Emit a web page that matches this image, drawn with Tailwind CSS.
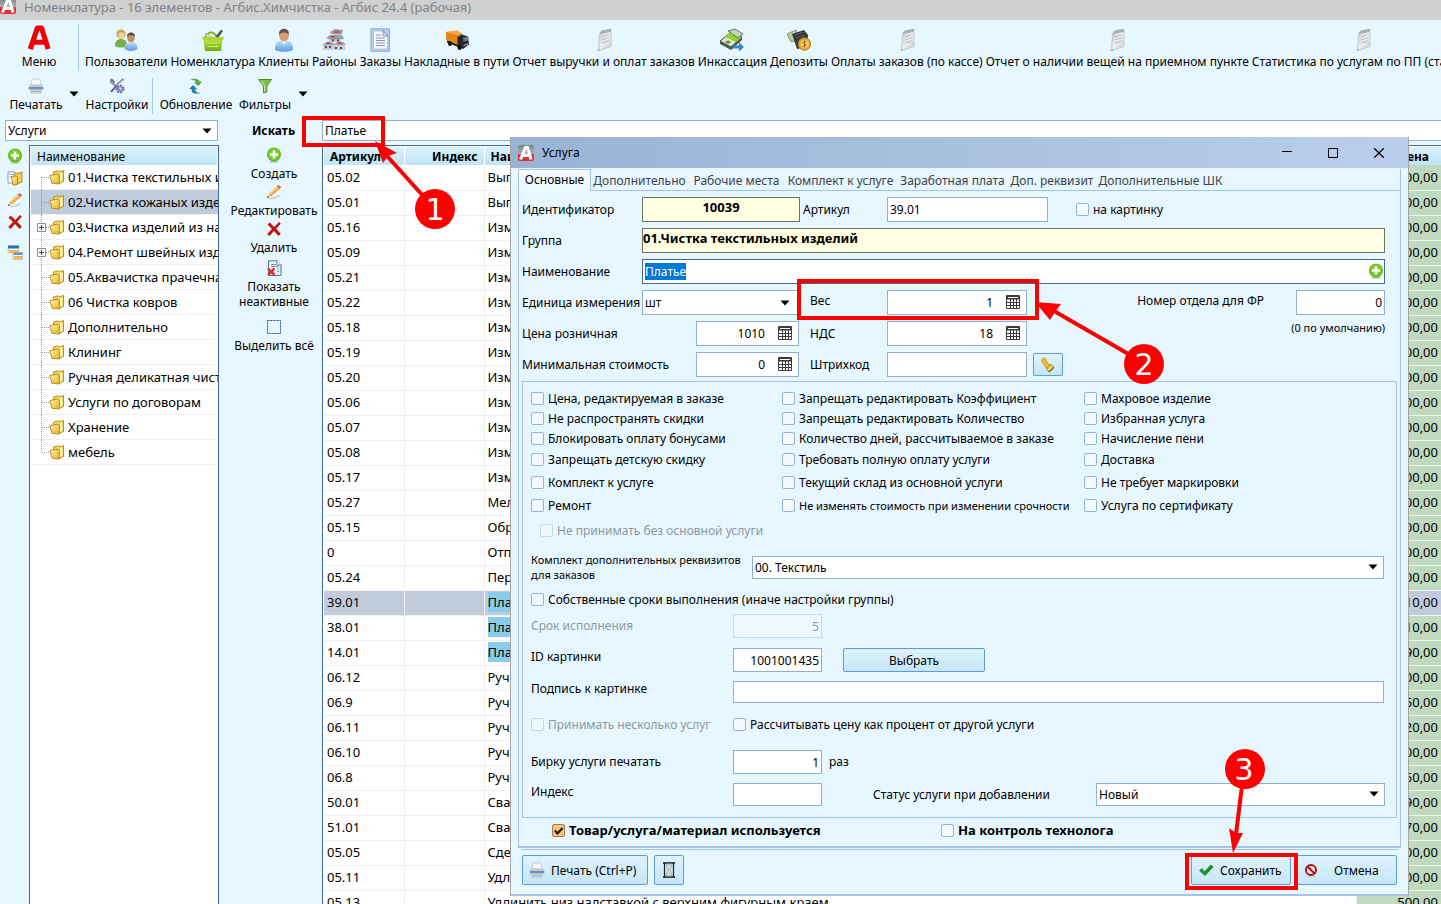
<!DOCTYPE html>
<html lang="ru">
<head>
  <meta charset="UTF-8">
  <meta name="viewport" content="width=device-width, initial-scale=1.0">
  <title>Номенклатура - Агбис.Химчистка</title>
  <script src="https://cdn.jsdelivr.net/npm/@tailwindcss/browser@4"></script>
</head>
<body class="h-screen flex flex-col overflow-hidden bg-[#e7f7ff] font-['Noto_Sans','Open_Sans',sans-serif] text-[12px] leading-[15px] text-black whitespace-nowrap">

<!-- icons -->
<svg class="absolute w-0 h-0">
  <defs>
    <linearGradient id="gold" x1="0" y1="0" x2="1" y2="1"><stop offset="0" stop-color="#fff6a8"/><stop offset="1" stop-color="#e8b422"/></linearGradient>
    <linearGradient id="blue" x1="0" y1="0" x2="0" y2="1"><stop offset="0" stop-color="#bfe0fb"/><stop offset="1" stop-color="#5b9bdc"/></linearGradient>
    <linearGradient id="lime" x1="0" y1="0" x2="0" y2="1"><stop offset="0" stop-color="#b6e03c"/><stop offset="1" stop-color="#6cae10"/></linearGradient>
    <linearGradient id="gray" x1="0" y1="0" x2="1" y2="1"><stop offset="0" stop-color="#b4bcc0"/><stop offset=".5" stop-color="#eceff0"/><stop offset="1" stop-color="#c8ced2"/></linearGradient>
    <linearGradient id="logo" x1="0" y1="0" x2="0" y2="1"><stop offset="0" stop-color="#7d8488"/><stop offset=".55" stop-color="#a9adb0"/><stop offset=".6" stop-color="#e0303a"/><stop offset="1" stop-color="#e0303a"/></linearGradient>
  </defs>
  <symbol id="i-logo" viewBox="0 0 16 16"><rect width="16" height="16" rx="2" fill="url(#logo)"/><path d="M2.500 14.500 7.500 2.600h2l3.600 11.900M5 10.500h7" fill="none" stroke="#fff" stroke-width="3"/></symbol>
  <symbol id="i-menu" viewBox="0 0 24 24"><path d="M4.500 21.500 10.600 3.500h3.600L19.800 21.500M8 15.600h9" fill="none" stroke="#f00000" stroke-width="4.400" stroke-linejoin="round"/></symbol>
  <symbol id="i-users" viewBox="0 0 24 24"><path d="M1 18c0-6 3-7 6-7s6 1 6 7c-3 2-9 2-12 0z" fill="#7cae4c"/><circle cx="7" cy="6" r="4.600" fill="#c9a653"/><ellipse cx="7.400" cy="7.600" rx="3" ry="3.400" fill="#f1d2a8"/><path d="M10.500 21c0-6 3-7 6.500-7s6.500 1 6.500 7c-3 2.500-10 2.500-13 0z" fill="url(#blue)"/><ellipse cx="17" cy="9.500" rx="3.800" ry="4.800" fill="#c98d5c"/><path d="M13 9c-.5-6 8.500-6 8 0-1.500-2-6-2.600-8 0z" fill="#55504c"/></symbol>
  <symbol id="i-basket" viewBox="0 0 24 24"><path d="M4 9c4-6 8-6 12 0" fill="none" stroke="#7fb718" stroke-width="2"/><path d="m4 5 7 4-3 3z" fill="#e9e4df" stroke="#a59a90" stroke-width=".6"/><path d="M12 12 20 1.500l2 1.500-7 10z" fill="#54585c"/><path d="M1 9h22l-1 3H2z" fill="#a8d832"/><path d="M2.500 12h19L20 23H4z" fill="url(#lime)"/><path d="M6 15h12M6.500 18.500h11" stroke="#cdee6a" stroke-width="1.200"/></symbol>
  <symbol id="i-client" viewBox="0 0 24 24"><path d="M3 22c-.5-8 4-9.500 9-9.500s9.500 1.500 9 9.500c-4 2.400-14 2.400-18 0z" fill="url(#blue)"/><path d="m9 12 3 5 3-5z" fill="#f2f8ff"/><ellipse cx="12" cy="7.500" rx="4.800" ry="6" fill="#d6a074"/><path d="M7 7C6-1.500 18-1.500 17 7c-2-3.500-8-3.500-10 0z" fill="#6a5648"/></symbol>
  <symbol id="i-houses" viewBox="0 0 24 24"><path d="M1 15h9v7H1zM10 15h13v7H10zM7 8h12v6H7zM11 3h8v5h-8z" fill="#c9ccd4"/><path d="m8 4 5-3 8 1-1 4H9zM4 10l4-3h12l2 4-12 1zM1 17l4-3h5l2 3zM12 17l3-3h6l3 3z" fill="#9a9fab"/><path d="M12 4h6M9 9h4M4 15h4M16 15h4" stroke="#cf3d3d" stroke-width="1.400"/><path d="M3 19h2M7 19h2M13 20h2M18 20h2M10 12.500h2M15 12.500h2" stroke="#444b5a" stroke-width="2"/></symbol>
  <symbol id="i-order" viewBox="0 0 24 24"><path d="M3 .8h18.500v22.500H3z" fill="#b8cdea" stroke="#8aa9d2"/><path d="M5.500 3H16l3.500 3.500V21h-14z" fill="#f5f9ff" stroke="#9ab5da" stroke-width=".7"/><path d="M15 2.500 20 8h-5z" fill="#c9dcf5" stroke="#6c90c6" stroke-width=".8"/><path d="M8 7h5M8 10h9M8 12.500h9M8 15h9M8 17.500h9" stroke="#7e97be" stroke-width="1.200"/></symbol>
  <symbol id="i-truck" viewBox="0 0 24 24"><path d="M1 4 12 2.500l5 3V16l-4 2L1 12z" fill="#e8841c"/><path d="M1 4 12 2.500l5 3-5 1.500z" fill="#f5ab49"/><path d="M12.500 9 17 6.500l6 2 1 8-6 4.500-5.500-2z" fill="#26282c"/><path d="m18 9.500 5-.5.500 3.500-5 1z" fill="#6d7a85"/><path d="M2 12.500 13 17v2L2 14.500z" fill="#1e1e1e"/><ellipse cx="5" cy="15.500" rx="2" ry="2.500" fill="#111"/><ellipse cx="14.500" cy="19.500" rx="2" ry="2.500" fill="#111"/><path d="M18.500 17.500 23 16" stroke="#c8c8c8"/></symbol>
  <symbol id="i-sheet" viewBox="0 0 24 24"><path d="M7.500 6 19 1v17.500L6.500 22.500z" fill="url(#gray)" stroke="#b9c1c5" stroke-width=".8"/><path d="M7.500 6C8 2.500 10 2 19 1v3z" fill="#a8b0b5"/><path d="m10 9 6.500-2.200M10 12l6.500-2.200M10 15l6.500-2.200" stroke="#b4bcc0"/><path d="M4.500 22.500 8 21v1.500z" fill="#9aa2a6"/></symbol>
  <symbol id="i-cash" viewBox="0 0 24 24"><path d="m0 13 11-9 11 5-11 10z" fill="#dfe6d2" stroke="#3d4a35"/><path d="m0 13 11 6v3L0 16zM11 19l11-10v3L11 22z" fill="#505c48"/><path d="m5 9 4-4 11 5-4 4z" fill="#8fd42a"/><path d="m8 3 7-2 8 5-5 4z" fill="#c7d3b8" stroke="#4a5940" stroke-width=".8"/><ellipse cx="8" cy="14" rx="2.500" ry="1.500" fill="#6d7e60"/><path d="M13 17.500h6V14l5 5-5 4.500v-3h-6z" fill="#2f8ccb"/></symbol>
  <symbol id="i-wallet" viewBox="0 0 24 24"><path d="m0 6 9-4 4 10-9 2z" fill="#bfcaa6" stroke="#6d7a55" stroke-width=".7"/><path d="m5 6 12-4 4 5-1 12-10 2z" fill="#37383a"/><path d="m8 7 9-3M9 10l9-3" stroke="#5c5e61"/><circle cx="17.500" cy="16" r="6.300" fill="#dda63a" stroke="#b67e1b" stroke-width=".8"/><circle cx="17.500" cy="16" r="4" fill="#f3cb6b"/><path d="M16 18.500c3.500 0 3.500-2.500 1.500-2.500s-1.500-2.500 1.500-2.500M17.500 12.500v7" fill="none" stroke="#a06d12"/></symbol>
  <symbol id="i-printer" viewBox="0 0 16 16"><path d="M4 1h8l1 6H3z" fill="#f7f8f9" stroke="#b2b6ba" stroke-width=".6"/><path d="M2 6.500h12l1.500 2V12H.5V8.500z" fill="#c4c9ce"/><path d="M1 9.200h14v1.600H1z" fill="#4a86c8"/><path d="M3 12h10v3H3z" fill="#eceeef" stroke="#979da3" stroke-width=".7"/><path d="M4 13.500h8" stroke="#b0b4b8"/></symbol>
  <symbol id="i-tools" viewBox="0 0 16 16"><circle cx="11" cy="11" r="3.500" fill="none" stroke="#6f6a9c" stroke-width="2" stroke-dasharray="2 1.200"/><circle cx="11" cy="11" r="2.300" fill="#dfe1ef" stroke="#716c9c"/><path d="M2 2v2.500L4.500 6 12 13.500" fill="none" stroke="#8d89b8" stroke-width="1.800"/><path d="M1.500 1.500 4 2.500 5 5M14.500 1 8 7 2 14" fill="none" stroke="#6c6899" stroke-width="2"/><path d="m14 1.500-6 6" stroke="#eceaf8"/></symbol>
  <symbol id="i-refresh" viewBox="0 0 16 16"><path d="M2.500 1.500C5 .3 11 .3 11.500 3.500H14L10.500 8 5.500 4.500H8C8 2.500 5 2 2.500 1.500z" fill="#57a83a"/><path d="M13.500 15.500H8c-4 0-4.500-2-4.500-4.500H1L5 7l4.500 4.200H7c0 2 3 3.600 6.500 4.300z" fill="#237fae"/></symbol>
  <symbol id="i-funnel" viewBox="0 0 16 16"><path d="M1.500 1.500h13L9.800 8v6L6.500 15V8z" fill="#7fc043" stroke="#4c8a20"/><path d="M4 2.800 7.700 8v5.500" fill="none" stroke="#cfeeb0"/></symbol>
  <symbol id="i-plus" viewBox="0 0 16 16"><ellipse cx="8" cy="14.800" rx="5" ry="1" fill="#b9c8c2"/><circle cx="8" cy="7.500" r="7" fill="#5fb51c"/><circle cx="8" cy="7" r="6" fill="#7cc931"/><path d="M8 3.500v8M4 7.500h8" stroke="#fff" stroke-width="2.600"/></symbol>
  <symbol id="i-folder" viewBox="0 0 16 16"><path d="M4.500 5.500V3l5-1.200 1 1L14.500 1.500v11L10 14.500z" fill="#f6d75c" stroke="#ab861a" stroke-width=".9"/><path d="M10.500 4.500 13.500 3v8.500l-3 2z" fill="#fdf2b4"/><path d="M.8 6.500 9.300 5l1 1v9L3 14.300z" fill="url(#gold)" stroke="#ab861a" stroke-width=".9"/></symbol>
  <symbol id="i-folders" viewBox="0 0 16 16"><path d="M1 2h7v11H1z" fill="#fff" stroke="#8898aa"/><path d="M2.500 4.500h4M2.500 7h3" stroke="#7c9cc8"/><path d="M7 4.500 10 3l1 .5 4-1.500v10L8 14.500z" fill="#f3cf4c" stroke="#a9851a" stroke-width=".9"/><path d="M4.500 6.500 9 6l1.500 1v7.500l-4.500.5z" fill="url(#gold)" stroke="#a9851a" stroke-width=".9"/></symbol>
  <symbol id="i-pencil" viewBox="0 0 16 16"><path d="M3 14.500c4 1 7-1 11-3" fill="none" stroke="#cbd3d7" stroke-width="1.500"/><path d="m1 14 1.500-4 8-7.500 3 2.500-8.500 7.500z" fill="#f0a93c"/><path d="m3.500 10 8-7" stroke="#fbdc96" stroke-width="1.200"/><path d="m1 14 1.500-4L5 12.500z" fill="#e8d9c0"/><path d="m1 14 .7-2 1.200 1.200z" fill="#222"/><path d="m10.500 2.500 2-1.500 3 2-2 2z" fill="#e0675c"/></symbol>
  <symbol id="i-cross" viewBox="0 0 16 16"><path d="m1.500 3.500 2.300-2 4.400 4.600L13 1l1.800 1.500-4.600 5.300 4.600 5L12.500 15 8 9.900 3.500 15l-2.300-2L6 8z" fill="#c5100c"/></symbol>
  <symbol id="i-levels" viewBox="0 0 16 16"><path d="M1 1.500h11v7.800H1z" fill="#fdf3d6" stroke="#b9c6d6" stroke-width=".6"/><path d="M1 1.500h11v3H1z" fill="#2d6fc0"/><path d="M1.500 6h10v2.800h-10z" fill="#f4b63c"/><path d="M6 8.500h9.500v7H6z" fill="#fff" stroke="#a9b4c0" stroke-width=".8"/><path d="M6.500 8.500h9V11h-9z" fill="#5b98d8"/><path d="M7 12h8v2.800H7z" fill="#f4b63c"/></symbol>
  <symbol id="i-inactive" viewBox="0 0 16 16"><path d="M2.500.8H11l4 4v10.700H2.500z" fill="#e8f0fb" stroke="#5d7193"/><path d="M11 .8V5h4" fill="#fff" stroke="#5d7193"/><path d="M5 4.500h5M5 6.500h8M11 9h2M11 11.500h2" stroke="#7e96bd"/><path d="m1 9 2-1.200 2.300 2.400L7.500 7.500l1.700 1.300-2 3 2.200 2.700-1.700 1.200-2.400-2.200L3 15.700l-2-1 2.500-3z" fill="#d8301f"/></symbol>
  <symbol id="i-select" viewBox="0 0 16 16"><path d="M1.500 1.500h13v13h-13z" fill="none" stroke="#1c4d9e" stroke-dasharray="2 1"/></symbol>
  <symbol id="i-calc" viewBox="0 0 14 14"><path d="M.5.500h13v13H.5z" fill="#fff" stroke="#3a3a3a"/><path d="M1 1h12v3.500H1z" fill="#3a3a3a"/><path d="M2 2.500h10" stroke="#fff"/><path d="M1 7.500h12M1 10.500h12M4.500 4v9M7.500 4v9M10.500 4v9" stroke="#3a3a3a"/></symbol>
  <symbol id="i-stamp" viewBox="0 0 16 16"><path d="M2 2.500C3 0 6.500 1 6.500 4c0 1.500 1 2.500 2.500 3.200l2 1.300-4 4c-.5-1.500-1.200-2.500-2.300-4C3.500 7 1.300 5.500 2 2.500z" fill="#f0bd2e" stroke="#a97708" stroke-width=".6"/><path d="m6.500 11.500 4.500-4 3 2.500-5 5z" fill="#f6cf5c" stroke="#8e6408" stroke-width=".7"/><path d="m9 15 5-4.600" stroke="#6f561c" stroke-width="1.200"/></symbol>
  <symbol id="i-hourglass" viewBox="0 0 16 16"><path d="M2 1h12M2 15h12" stroke="#111" stroke-width="1.600"/><path d="M5 2c0 3.500 2 4 2 6s-2 2.500-2 6h6c0-3.500-2-4-2-6s2-2.500 2-6z" fill="#cfdcdc" stroke="#98a8a8" stroke-width=".8"/><path d="M3.500 1v14M12.500 1v14" stroke="#222" stroke-width="1.200"/></symbol>
  <symbol id="i-check" viewBox="0 0 16 16"><path d="m1 8.500 3-2.300 2.500 3L13 2.500 15.500 5 7 14z" fill="#1d8f33"/></symbol>
  <symbol id="i-ban" viewBox="0 0 16 16"><ellipse cx="8" cy="15.300" rx="5" ry=".7" fill="#bccbd4"/><circle cx="8" cy="8" r="5.800" fill="#f4e4e6" stroke="#b01119" stroke-width="2.200"/><path d="m4 4 8 8" stroke="#b01119" stroke-width="2.200"/></symbol>
  <symbol id="i-down" viewBox="0 0 10 6"><path d="M.5.500h9L5 5.500z" fill="#000"/></symbol>
</svg>

<header class="h-5 shrink-0 flex items-start bg-[#d0d0d0] text-[#7d8287]">
  <svg class="w-4 h-4 -mt-0.5"><use href="#i-logo"/></svg>
  <span class="ml-2 text-[13px] leading-[14px]">Номенклатура - 16 элементов - Агбис.Химчистка - Агбис 24.4 (рабочая)</span>
</header>

<!-- toolbars -->
<nav class="shrink-0 h-[52px] pt-1 flex">
  <button class="w-[78px] shrink-0 flex flex-col items-center gap-0.5"><svg class="w-7 h-7"><use href="#i-menu"/></svg>Меню</button>
  <div class="w-px h-[47px] mr-1.5 shrink-0 bg-[#a6c8ea]"></div>
  <div id="tools" class="flex gap-[3px] pt-1"></div>
</nav>
<nav class="shrink-0 h-12 pt-1.5 flex">
  <button class="w-[72px] flex flex-col items-center gap-[3px]"><svg class="w-4 h-4"><use href="#i-printer"/></svg>Печатать</button>
  <button class="-ml-[3px] mr-[3px] w-[10px] flex items-center h-8" aria-label="Печать, меню"><svg class="w-2.5 h-1.5"><use href="#i-down"/></svg></button>
  <button class="w-[70px] flex flex-col items-center gap-[3px]"><svg class="w-4 h-4"><use href="#i-tools"/></svg>Настройки</button>
  <div class="w-px h-9 mr-1 bg-[#a6c8ea]"></div>
  <button class="w-[78px] flex flex-col items-center gap-[3px]"><svg class="w-4 h-4"><use href="#i-refresh"/></svg>Обновление</button>
  <button class="w-[60px] flex flex-col items-center gap-[3px]"><svg class="w-4 h-4"><use href="#i-funnel"/></svg>Фильтры</button>
  <button class="ml-[3px] w-[10px] flex items-center h-8" aria-label="Фильтры, меню"><svg class="w-2.5 h-1.5"><use href="#i-down"/></svg></button>
</nav>

<main class="flex-1 min-h-0 flex">
  <aside class="w-[219px] shrink-0 flex flex-col gap-1">
    <div class="relative ml-[5px] mr-px">
      <select aria-label="Раздел" class="appearance-none block w-full h-[21px] pl-0.5 bg-white border border-[#8fafd9]"><option>Услуги</option></select>
      <svg class="absolute right-1.5 top-2 w-2.5 h-1.5 pointer-events-none"><use href="#i-down"/></svg>
    </div>
    <div class="flex-1 min-h-0 flex">
      <div class="w-[29px] pt-[3px] flex flex-col items-center gap-1.5">
        <button aria-label="Добавить"><svg class="w-4 h-4"><use href="#i-plus"/></svg></button>
        <button aria-label="Копировать"><svg class="w-4 h-4"><use href="#i-folders"/></svg></button>
        <button aria-label="Изменить"><svg class="w-4 h-4"><use href="#i-pencil"/></svg></button>
        <button aria-label="Удалить"><svg class="w-4 h-4"><use href="#i-cross"/></svg></button>
        <button class="mt-2" aria-label="Уровни"><svg class="w-4 h-4"><use href="#i-levels"/></svg></button>
      </div>
      <div class="flex-1 min-w-0 bg-white border border-b-0 border-[#3f6797] overflow-hidden text-[13px]">
        <div class="mt-px ml-px mr-px h-[18px] pl-1.5 flex items-center text-[12px] bg-linear-to-b from-[#d9f1fd] to-[#bfe4f7]">Наименование</div>
        <ul id="tree" class="ml-px"></ul>
      </div>
    </div>
  </aside>

  <section class="w-[103px] shrink-0 pt-[3px] pl-[7px] flex flex-col items-center text-center">
    <label for="search" class="self-end mr-[27px] font-bold">Искать</label>
    <button class="mt-[9px] flex flex-col items-center gap-[3px]"><svg class="w-4 h-4"><use href="#i-plus"/></svg>Создать</button>
    <button class="mt-[3px] flex flex-col items-center gap-[3px]"><svg class="w-4 h-4"><use href="#i-pencil"/></svg>Редактировать</button>
    <button class="mt-[3px] flex flex-col items-center gap-[3px]"><svg class="w-4 h-4"><use href="#i-cross"/></svg>Удалить</button>
    <button class="mt-[5px] flex flex-col items-center gap-[3px]"><svg class="w-4 h-4"><use href="#i-inactive"/></svg><span>Показать<br>неактивные</span></button>
    <button class="mt-2.5 flex flex-col items-center gap-[3px]"><svg class="w-4 h-4"><use href="#i-select"/></svg>Выделить всё</button>
  </section>

  <section class="flex-1 min-w-0 flex flex-col gap-1">
    <input id="search" value="Платье" class="w-full h-[21px] px-0.5 bg-white border border-r-0 border-[#8fafd9]">
    <div class="flex-1 min-h-0 overflow-hidden bg-white border-t border-l border-[#3f6797] pt-px pl-px">
      <table class="w-full table-fixed border-collapse text-[13px]">
        <colgroup><col class="w-[80px]"><col class="w-[80px]"><col><col class="w-[85px]"></colgroup>
        <thead class="text-[12px] leading-[17px] bg-linear-to-b from-[#d9f1fd] to-[#bfe4f7]">
          <tr class="h-[18px]">
            <th class="p-0 pl-1.5 text-left border-r border-white">Артикул</th>
            <th class="p-0 pr-1.5 text-right border-r border-white">Индекс</th>
            <th class="p-0 pl-1.5 text-left border-r border-white">Наименование</th>
            <th class="p-0 pr-3 text-right">Цена</th>
          </tr>
        </thead>
        <tbody id="rows"></tbody>
      </table>
    </div>
  </section>
</main>

<!-- service card window -->
<form class="absolute left-[510px] right-[32px] top-[137px] bg-[#e7f7ff] border-x border-b-2 border-b-[#a3c2ec] border-x-[#a5a5a5]">
  <div class="h-[31px] flex items-center pl-[7px] bg-linear-to-r from-[#98b3d3] to-[#b9cfeb]">
    <svg class="w-4 h-4"><use href="#i-logo"/></svg>
    <h1 class="ml-2 flex-1">Услуга</h1>
    <button type="button" class="w-[46px] h-6 flex justify-center items-center" aria-label="Свернуть"><svg class="w-2.5 h-2.5"><path d="M0 3.500h10" stroke="#000"/></svg></button>
    <button type="button" class="w-[46px] h-6 flex justify-center items-center" aria-label="Развернуть"><svg class="w-2.5 h-2.5"><path d="M.5.500h9v9h-9z" fill="none" stroke="#000"/></svg></button>
    <button type="button" class="w-[46px] h-6 mr-1.5 flex justify-center items-center" aria-label="Закрыть"><svg class="w-2.5 h-2.5"><path d="m0 0 10 10M10 0 0 10" stroke="#000" stroke-width="1.300"/></svg></button>
  </div>

  <div class="mx-[7px] mt-px border border-t-0 border-b-2 border-[#a3c2ec]">
    <div class="h-[22px] flex items-end text-[#3c4248] border-b border-[#a3c2ec]">
      <button type="button" class="w-[72px] h-[22px] pb-0.5 -mb-px bg-linear-to-b from-[#f7fcff] to-[#e7f7ff] border border-b-0 border-l-0 border-[#a3c2ec] text-black">Основные</button>
      <button type="button" class="w-[97px] h-5">Дополнительно</button>
      <button type="button" class="w-[97px] h-5">Рабочие места</button>
      <button type="button" class="w-[111px] h-5">Комплект к услуге</button>
      <button type="button" class="w-[113px] h-5">Заработная плата</button>
      <button type="button" class="w-[86px] h-5">Доп. реквизит</button>
      <button type="button" class="w-[131px] h-5">Дополнительные ШК</button>
    </div>

    <div class="pt-1.5 pl-[3px] pr-[15px] flex flex-col gap-1.5">
      <div class="h-[25px] flex items-center">
        <label for="ident" class="w-[120px]">Идентификатор</label>
        <input id="ident" value="10039" readonly class="w-[158px] h-[25px] pb-1.5 text-center text-[13px] font-bold bg-[#ffffe1] border border-[#707060]">
        <label for="art" class="w-[87px] pl-[3px]">Артикул</label>
        <input id="art" value="39.01" class="w-[161px] h-[25px] px-0.5 bg-white border border-[#8fafd9]">
        <label class="ml-7 flex items-center gap-1"><input type="checkbox" class="appearance-none shrink-0 w-[13px] h-[13px] rounded-[2px] bg-[#f4f8ff] border border-[#94b2de]">на картинку</label>
      </div>
      <div class="h-[25px] flex items-center">
        <label for="group" class="w-[120px]">Группа</label>
        <input id="group" value="01.Чистка текстильных изделий" readonly class="flex-1 h-[25px] pb-1.5 text-[13px] font-bold bg-[#ffffe1] border border-[#707060]">
      </div>
      <div class="h-[25px] flex items-center">
        <label for="name" class="w-[120px]">Наименование</label>
        <div class="relative flex-1">
          <input id="name" value="Платье" class="block w-full h-[25px] px-0.5 bg-white border border-[#3f6797] outline-none selection:bg-[#0078d7] selection:text-white">
          <button type="button" class="absolute right-px top-1" aria-label="Добавить наименование"><svg class="w-4 h-4"><use href="#i-plus"/></svg></button>
        </div>
      </div>
      <div class="h-[25px] flex items-center">
        <label for="unit" class="w-[120px]">Единица измерения</label>
        <div class="relative w-[158px]">
          <select id="unit" class="appearance-none block w-full h-[25px] pl-0.5 bg-white border border-[#8fafd9]"><option>шт</option></select>
          <svg class="absolute right-2.5 top-2.5 w-2.5 h-1.5 pointer-events-none"><use href="#i-down"/></svg>
        </div>
        <label for="weight" class="w-[87px] pl-2.5 pb-1">Вес</label>
        <div class="relative w-[140px]">
          <input id="weight" value="1" class="block w-full h-[25px] pr-[33px] text-right bg-white border border-[#8fafd9]">
          <svg class="absolute right-[7px] top-[5px] w-3.5 h-3.5"><use href="#i-calc"/></svg>
        </div>
        <label for="dept" class="ml-auto mr-8 pb-1">Номер отдела для ФР</label>
        <input id="dept" value="0" class="w-[89px] h-[25px] px-0.5 text-right bg-white border border-[#8fafd9]">
      </div>
      <div class="h-[25px] flex items-center">
        <label for="price" class="w-[174px]">Цена розничная</label>
        <div class="relative w-[104px] pr-px">
          <input id="price" value="1010" class="block w-full h-[25px] pr-[33px] text-right bg-white border border-[#8fafd9]">
          <svg class="absolute right-[8px] top-[5px] w-3.5 h-3.5"><use href="#i-calc"/></svg>
        </div>
        <label for="vat" class="w-[87px] pl-2.5">НДС</label>
        <div class="relative w-[140px]">
          <input id="vat" value="18" class="block w-full h-[25px] pr-[33px] text-right bg-white border border-[#8fafd9]">
          <svg class="absolute right-[7px] top-[5px] w-3.5 h-3.5"><use href="#i-calc"/></svg>
        </div>
        <span class="ml-auto pb-3 text-[11px]">(0 по умолчанию)</span>
      </div>
      <div class="h-[25px] flex items-center">
        <label for="minprice" class="w-[174px]">Минимальная стоимость</label>
        <div class="relative w-[104px] pr-px">
          <input id="minprice" value="0" class="block w-full h-[25px] pr-[33px] text-right bg-white border border-[#8fafd9]">
          <svg class="absolute right-[8px] top-[5px] w-3.5 h-3.5"><use href="#i-calc"/></svg>
        </div>
        <label for="barcode" class="w-[87px] pl-2.5">Штрихкод</label>
        <input id="barcode" class="w-[140px] h-[25px] bg-white border border-[#8fafd9]">
        <button type="button" aria-label="Создать штрихкод" class="ml-1.5 w-[30px] h-[23px] flex justify-center items-center rounded-[2px] bg-linear-to-b from-[#dff3fd] to-[#c5e6f7] border border-[#5e9ade]"><svg class="w-4 h-4"><use href="#i-stamp"/></svg></button>
      </div>
    </div>

    <div class="mt-1 mx-[3px] pt-1.5 px-2 pb-[11px] border border-[#a3c2ec]">
      <div id="flags" class="grid grid-cols-[251px_302px_1fr] grid-rows-[20px_20px_20px_23px_23px_23px] items-center"></div>
      <label class="h-[26px] ml-[9px] flex items-center gap-1 text-[#8e979f]"><input type="checkbox" disabled class="appearance-none shrink-0 w-[13px] h-[13px] rounded-[2px] bg-[#edf7ff] border border-[#c5d8ee]">Не принимать без основной услуги</label>

      <div class="mt-2 h-8 flex items-center">
        <label for="kit" class="w-[221px] text-[11px]">Комплект дополнительных реквизитов<br>для заказов</label>
        <div class="relative flex-1 mr-1">
          <select id="kit" class="appearance-none block w-full h-[23px] pl-0.5 bg-white border border-[#8fafd9]"><option>00. Текстиль</option></select>
          <svg class="absolute right-1.5 top-2 w-2.5 h-1.5 pointer-events-none"><use href="#i-down"/></svg>
        </div>
      </div>
      <label class="mt-1 h-6 flex items-center gap-1"><input type="checkbox" class="appearance-none shrink-0 w-[13px] h-[13px] rounded-[2px] bg-[#f4f8ff] border border-[#94b2de]">Собственные сроки выполнения (иначе настройки группы)</label>
      <div class="mt-[3px] h-6 flex items-center text-[#8e979f]">
        <label for="term" class="w-[202px] pb-0.5">Срок исполнения</label>
        <input id="term" value="5" disabled class="w-[89px] h-6 px-0.5 text-right bg-[#eff8ff] border border-[#c5d8ee]">
      </div>
      <div class="mt-2.5 h-6 flex items-center">
        <label for="picid" class="w-[202px] pb-2">ID картинки</label>
        <input id="picid" value="1001001435" class="w-[89px] h-6 px-0.5 text-right bg-white border border-[#8fafd9]">
        <button type="button" class="ml-[21px] w-[142px] h-6 rounded-[2px] bg-linear-to-b from-[#dff3fd] to-[#c5e6f7] border border-[#5e9ade]">Выбрать</button>
      </div>
      <div class="mt-2 h-6 flex items-center">
        <label for="caption" class="w-[202px] pb-2">Подпись к картинке</label>
        <input id="caption" class="flex-1 mr-1 h-[22px] bg-white border border-[#8fafd9]">
      </div>
      <div class="mt-2 h-6 flex items-center">
        <label class="w-[202px] flex items-center gap-1 text-[#8e979f]"><input type="checkbox" disabled class="appearance-none shrink-0 w-[13px] h-[13px] rounded-[2px] bg-[#edf7ff] border border-[#c5d8ee]">Принимать несколько услуг</label>
        <label class="flex items-center gap-1"><input type="checkbox" class="appearance-none shrink-0 w-[13px] h-[13px] rounded-[2px] bg-[#f4f8ff] border border-[#94b2de]">Рассчитывать цену как процент от другой услуги</label>
      </div>
      <div class="mt-3.5 h-6 flex items-center">
        <label for="tag" class="w-[202px] pb-0.5">Бирку услуги печатать</label>
        <input id="tag" value="1" class="w-[89px] h-6 px-0.5 text-right bg-white border border-[#8fafd9]">
        <span class="ml-[7px] pb-0.5">раз</span>
      </div>
      <div class="mt-2 h-6 flex items-center">
        <label for="index" class="w-[202px] pb-1.5">Индекс</label>
        <input id="index" class="w-[89px] h-[23px] px-0.5 bg-white border border-[#8fafd9]">
        <label for="status" class="ml-[51px] flex-1">Статус услуги при добавлении</label>
        <div class="relative w-[289px] mr-[3px]">
          <select id="status" class="appearance-none block w-full h-[23px] pl-0.5 bg-white border border-[#8fafd9]"><option>Новый</option></select>
          <svg class="absolute right-1.5 top-2 w-2.5 h-1.5 pointer-events-none"><use href="#i-down"/></svg>
        </div>
      </div>
    </div>

    <div class="h-7 pb-1 pl-[33px] flex items-center font-bold text-[13px]">
      <label class="w-[389px] flex items-center gap-1"><span class="grid w-[13px] h-[13px]"><input type="checkbox" checked class="appearance-none col-start-1 row-start-1 w-[13px] h-[13px] rounded-[2px] bg-[#fbc476] border border-[#9a7b55]"><svg class="col-start-1 row-start-1 w-[13px] h-[13px] pointer-events-none"><path d="m3 6.500 2.500 3L10.500 4" fill="none" stroke="#111" stroke-width="2"/></svg></span>Товар/услуга/материал используется</label>
      <label class="flex items-center gap-1"><input type="checkbox" class="appearance-none shrink-0 w-[13px] h-[13px] rounded-[2px] bg-[#f4f8ff] border border-[#94b2de]">На контроль технолога</label>
    </div>
  </div>

  <div class="mx-2.5 mt-px pt-[5px] pb-[9px] flex border-t border-[#a3c2ec]">
    <button type="button" class="ml-px w-[126px] h-[30px] px-1.5 flex items-center gap-1.5 rounded-[2px] bg-linear-to-b from-[#dff3fd] to-[#c5e6f7] border border-[#5e9ade]"><svg class="w-4 h-4"><use href="#i-printer"/></svg>Печать (Ctrl+P)</button>
    <button type="button" aria-label="История" class="ml-1.5 w-[30px] h-[30px] flex justify-center items-center rounded-[2px] bg-linear-to-b from-[#dff3fd] to-[#c5e6f7] border border-[#5e9ade]"><svg class="w-4 h-4"><use href="#i-hourglass"/></svg></button>
    <button class="ml-auto w-[100px] h-[30px] px-1.5 flex items-center gap-1.5 rounded-[2px] bg-linear-to-b from-[#dff3fd] to-[#c5e6f7] border border-[#5e9ade]"><svg class="w-4 h-4 shrink-0"><use href="#i-check"/></svg>Сохранить</button>
    <button type="button" class="ml-1.5 mr-px w-[100px] h-[30px] px-1.5 flex items-center gap-4 rounded-[2px] bg-linear-to-b from-[#dff3fd] to-[#c5e6f7] border border-[#5e9ade]"><svg class="w-3.5 h-4 shrink-0"><use href="#i-ban"/></svg>Отмена</button>
  </div>
</form>

<!-- numbered hints over the windows -->
<svg class="absolute left-0 top-0 w-[1441px] h-[904px] pointer-events-none" viewBox="0 0 1441 904">
  <g fill="none" stroke="#fe0000" stroke-width="4">
    <rect x="304" y="118" width="79" height="27"/>
    <rect x="799" y="281" width="238" height="37"/>
    <rect x="1187" y="855" width="109" height="33"/>
    <path d="M434 208 387 156M1144 363 1054 311M1244 770 1236 834"/>
  </g>
  <g fill="#fe0000">
    <path d="m375 141 22 12-9 3-5 7z"/>
    <path d="m1035 302 26 2-6 8-5 8z"/>
    <path d="m1233 853-4-25 7 5 7 0z"/>
    <circle cx="435" cy="209" r="20"/><circle cx="1144" cy="364" r="20"/><circle cx="1245" cy="769" r="20"/>
  </g>
  <g class="fill-white text-[30px] font-['DejaVu_Sans']" text-anchor="middle">
    <text x="435" y="220">1</text><text x="1144" y="375">2</text><text x="1244" y="780">3</text>
  </g>
</svg>

<script>
  const tools = [
    ["Пользователи", "users"],
    ["Номенклатура", "basket"],
    ["Клиенты", "client"],
    ["Районы", "houses"],
    ["Заказы", "order"],
    ["Накладные в пути", "truck"],
    ["Отчет выручки и оплат заказов", "sheet"],
    ["Инкассация", "cash"],
    ["Депозиты", "wallet"],
    ["Оплаты заказов (по кассе)", "sheet"],
    ["Отчет о наличии вещей на приемном пункте", "sheet"],
    ["Статистика по услугам по ПП (старый)", "sheet"],
  ];
  document.querySelector("#tools").innerHTML = tools.map(([text, icon]) => `
    <button class="shrink-0 flex flex-col items-center gap-0.5"><svg class="w-6 h-6"><use href="#i-${icon}"/></svg>${text}</button>`).join("");

  const groups = ["01.Чистка текстильных изделий", "02.Чистка кожаных изделий", "03.Чистка изделий из натурального меха", "04.Ремонт швейных изделий",
    "05.Аквачистка прачечная", "06 Чистка ковров", "Дополнительно", "Клининг", "Ручная деликатная чистка", "Услуги по договорам", "Хранение", "мебель"];
  document.querySelector("#tree").innerHTML = groups.map((name, i) => {
    const plus = i == 2 || i == 3;
    const last = i == groups.length - 1;
    return `<li class="h-[25px] flex items-center border-b border-[#f0f0f0] ${i == 1 ? "bg-[#c0ccdb]" : ""}">
      <svg class="w-[18px] h-[25px] shrink-0"><path d="M10.500 ${i ? 0 : 12}V${last ? 12 : 25}M11 12.500h7" stroke="#999" stroke-dasharray="1 1"/>
      ${plus ? '<path d="M6.500 8.500h8v8h-8z" fill="#fff" stroke="#8a94a5"/><path d="M8 12.500h5M10.500 10v5" stroke="#2b4a80"/>' : ""}</svg>
      <svg class="w-4 h-4 shrink-0"><use href="#i-folder"/></svg><span class="ml-[3px]">${name}</span></li>`;
  }).join("");

  const rows = [
    ["05.02", "Вып", "00,00"], ["05.01", "Вып", "00,00"], ["05.16", "Изм", "00,00"], ["05.09", "Изм", "00,00"],
    ["05.21", "Изм", "00,00"], ["05.22", "Изм", "00,00"], ["05.18", "Изм", "00,00"], ["05.19", "Изм", "00,00"],
    ["05.20", "Изм", "00,00"], ["05.06", "Изм", "00,00"], ["05.07", "Изм", "00,00"], ["05.08", "Изм", "00,00"],
    ["05.17", "Изм", "00,00"], ["05.27", "Мел", "00,00"], ["05.15", "Обр", "00,00"], ["0", "Отп", "00,00"],
    ["05.24", "Пер", "00,00"], ["39.01", "Пла", "10,00"], ["38.01", "Пла", "10,00"], ["14.01", "Пла", "90,00"],
    ["06.12", "Ручн", "00,00"], ["06.9", "Ручн", "50,00"], ["06.11", "Ручн", "20,00"], ["06.10", "Ручн", "00,00"],
    ["06.8", "Ручн", "50,00"], ["50.01", "Свад", "90,00"], ["51.01", "Свад", "70,00"], ["05.05", "Сдел", "00,00"],
    ["05.11", "Удли", "00,00"], ["05.13", "Удлинить низ надставкой с верхним фигурным краем", "500,00"],
  ];
  document.querySelector("#rows").innerHTML = rows.map(([code, name, price]) => {
    const current = code == "39.01";
    const cell = "p-0 pl-[3px] border-r border-b border-[#f0f0f0]";
    const text = name == "Пла" ? `<span class="bg-[#87cdeb] py-px">${name}</span>` : name;
    return `<tr class="h-[25px] ${current ? "bg-[#c0ccdb]" : ""}">
      <td class="${cell}">${code}</td><td class="${cell}"></td><td class="${cell}">${text}</td>
      <td class="p-0 pr-[3px] text-right border-b border-[#eef5ee] ${current ? "" : "bg-[#bfdabf]"}">${price}</td></tr>`;
  }).join("");

  const flags = ["Цена, редактируемая в заказе", "Запрещать редактировать Коэффициент", "Махровое изделие",
    "Не распространять скидки", "Запрещать редактировать Количество", "Избранная услуга",
    "Блокировать оплату бонусами", "Количество дней, рассчитываемое в заказе", "Начисление пени",
    "Запрещать детскую скидку", "Требовать полную оплату услуги", "Доставка",
    "Комплект к услуге", "Текущий склад из основной услуги", "Не требует маркировки",
    "Ремонт", "Не изменять стоимость при изменении срочности", "Услуга по сертификату"];
  // the longest caption has to fit its column
  document.querySelector("#flags").innerHTML = flags.map(text => `
    <label class="flex items-center gap-1 ${text.length > 42 ? "text-[11px]" : ""}"><input type="checkbox" class="appearance-none shrink-0 w-[13px] h-[13px] rounded-[2px] bg-[#f4f8ff] border border-[#94b2de]">${text}</label>`).join("");

  const nameInput = document.querySelector("#name");
  nameInput.focus();
  nameInput.select();
</script>
</body>
</html>
